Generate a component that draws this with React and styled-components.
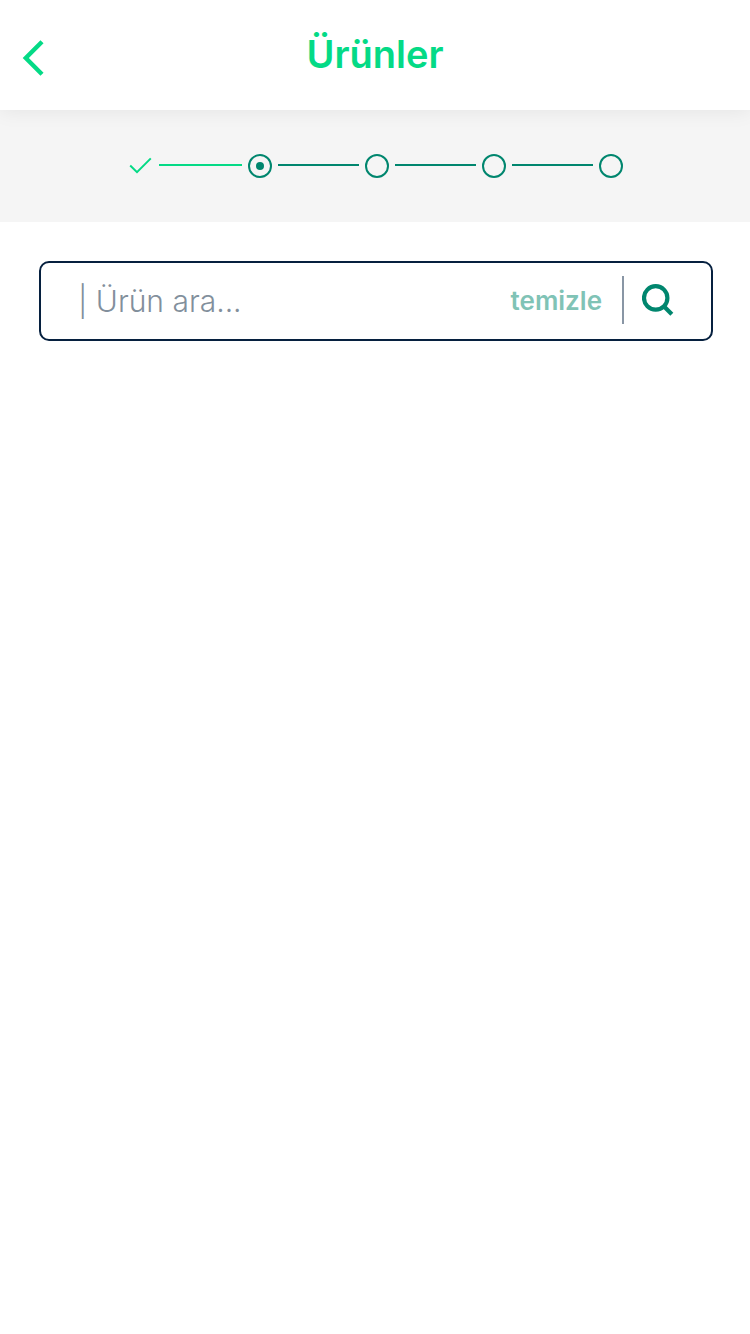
import React from "react";
import styled, { createGlobalStyle } from "styled-components";

const GlobalStyle = createGlobalStyle`
  *, *::before, *::after { box-sizing: border-box; }
  body {
    margin: 0;
    background: #ffffff;
    font-family: Inter, "Liberation Sans", sans-serif;
  }
`;

const Header = styled.header`
  position: relative;
  z-index: 1;
  display: grid;
  grid-template-columns: 64px 1fr 64px;
  height: 110px;
  background: #ffffff;
  box-shadow: 0 0 20px rgba(0, 0, 0, 0.08);
`;

const IconButton = styled.button`
  display: flex;
  align-items: center;
  flex-shrink: 0;
  padding: 0;
  border: 0;
  background: none;
  color: ${(p) => p.$color};
  cursor: pointer;
`;

const BackButton = styled(IconButton)`
  padding: 6px 0 0 20px;
`;

const Title = styled.h1`
  margin: 0;
  color: #04da86;
  font-size: 38px;
  font-weight: 600;
  line-height: 108px;
  text-align: center;
`;

const Progress = styled.nav`
  height: 112px;
  padding: 44px 24px 0 26px;
  background: #f5f5f5;
`;

const Steps = styled.ol`
  display: flex;
  align-items: center;
  gap: 6px;
  max-width: 494px;
  margin: 0 auto;
  padding: 0;
  list-style: none;
`;

const Step = styled.li`
  display: flex;
  align-items: center;
  justify-content: center;
  flex: none;
  width: 24px;
  height: 24px;
  border: ${(p) => (p.$done ? "0" : "2px solid #00866e")};
  border-radius: 50%;
`;

const Dot = styled.span`
  width: 8px;
  height: 8px;
  border-radius: 50%;
  background: #00866e;
`;

const Connector = styled.li`
  flex: ${(p) => (p.$done ? 83 : 81)} 1 0;
  height: 2px;
  margin-bottom: 2px;
  background: ${(p) => (p.$done ? "#04da86" : "#00866e")};
`;

const Main = styled.main`
  padding: 39px 37px 39px 39px;
`;

const SearchForm = styled.form`
  display: flex;
  align-items: center;
  height: 80px;
  padding: 0 37px;
  border: 2px solid #06203f;
  border-radius: 10px;
`;

const SearchInput = styled.input`
  flex: 1;
  min-width: 0;
  padding: 0;
  border: 0;
  outline: 0;
  background: none;
  color: #06203f;
  font-family: inherit;
  font-size: 30px;
  font-weight: 300;
  line-height: 40px;

  &::placeholder {
    color: #828f9c;
    opacity: 1;
  }
`;

const ClearButton = styled.button`
  padding: 0;
  border: 0;
  background: none;
  color: #80c3b6;
  font-family: inherit;
  font-size: 26px;
  font-weight: 600;
  line-height: 40px;
  cursor: pointer;
`;

const Divider = styled.span`
  width: 2px;
  height: 48px;
  margin: 0 18px 2px 20px;
  background: #8996a5;
`;

const steps = ["done", "current", "todo", "todo", "todo"];

export default function App() {
  return (
    <>
      <GlobalStyle />
      <Header>
        <BackButton type="button" aria-label="Geri" $color="#04da86">
          <svg width="26" height="36" viewBox="0 0 26 36" fill="none" stroke="currentColor" strokeWidth="4.4">
            <path d="M22 1.8 5.8 18 22 34.2" />
          </svg>
        </BackButton>
        <Title>Ürünler</Title>
      </Header>
      <Progress aria-label="Adımlar">
        <Steps>
          {steps.map((state, i) => (
            <React.Fragment key={i}>
              {i > 0 && <Connector aria-hidden="true" $done={steps[i - 1] === "done"} />}
              <Step $done={state === "done"} aria-current={state === "current" ? "step" : undefined}>
                {state === "done" && (
                  <svg width="24" height="24" viewBox="0 0 24 24" fill="none" stroke="#04da86" strokeWidth="2">
                    <path d="M1.2 11.5 8 18.2 21.8 4.4" />
                  </svg>
                )}
                {state === "current" && <Dot />}
              </Step>
            </React.Fragment>
          ))}
        </Steps>
      </Progress>
      <Main>
        <SearchForm role="search" onSubmit={(e) => e.preventDefault()}>
          <SearchInput type="text" aria-label="Ürün ara" placeholder="| Ürün ara..." />
          <ClearButton type="reset">temizle</ClearButton>
          <Divider />
          <IconButton type="submit" aria-label="Ara" $color="#00866e">
            <svg width="32" height="34" viewBox="0 0 32 34" fill="none" stroke="currentColor" strokeWidth="4.2">
              <circle cx="13.7" cy="13.9" r="11.7" />
              <path d="M21.8 22.2 29.8 30.2" />
            </svg>
          </IconButton>
        </SearchForm>
      </Main>
    </>
  );
}
